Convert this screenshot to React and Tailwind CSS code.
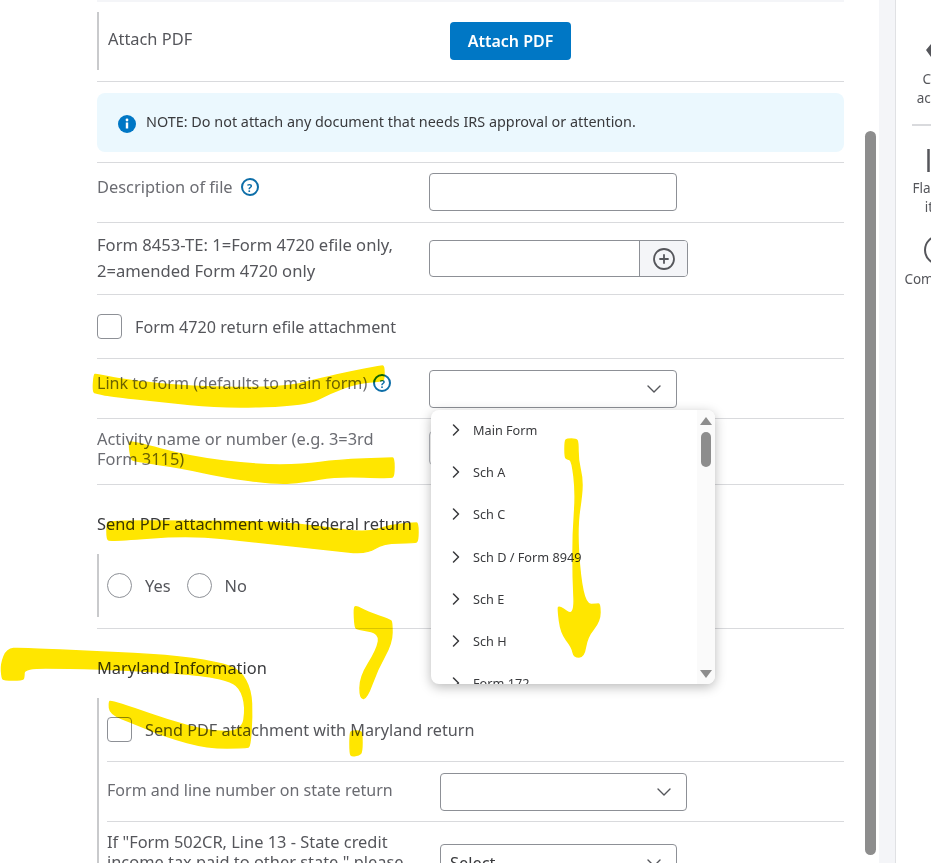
import React from 'react';
import { ChevronDown, ChevronRight, CirclePlus } from 'lucide-react';

const formOptions = ['Main Form', 'Sch A', 'Sch C', 'Sch D / Form 8949', 'Sch E', 'Sch H', 'Form 172'];

const highlightStrokes = [
  [[94, 375], [96, 374], [123, 380], [190, 387], [283, 388], [323, 378], [350, 372], [381, 366], [384, 366], [384, 379], [382, 381], [357, 383], [330, 393], [307, 405], [223, 408], [157, 401], [110, 396], [96, 393], [93, 392]],
  [[129, 443], [131, 441], [190, 457], [257, 465], [303, 465], [337, 460], [391, 458], [394, 458], [394, 476], [391, 478], [337, 476], [303, 482], [277, 484], [223, 477], [183, 468], [134, 461], [131, 459]],
  [[107, 524], [109, 521], [190, 521], [277, 522], [323, 527], [367, 533], [390, 525], [415, 523], [418, 523], [418, 541], [415, 543], [383, 543], [367, 554], [330, 550], [257, 542], [190, 535], [110, 541], [107, 539]],
  [[565, 441], [567, 439], [576, 439], [578, 442], [578, 460], [582, 477], [582, 493], [577, 527], [580, 577], [586, 605], [597, 604], [600, 604], [600, 621], [587, 637], [584, 657], [574, 657], [572, 647], [561, 633], [558, 609], [559, 606], [575, 617], [573, 577], [573, 533], [576, 493], [572, 460], [567, 459], [565, 457]],
  [[1, 664], [7, 649], [20, 648], [100, 652], [167, 655], [217, 662], [240, 670], [251, 690], [252, 717], [250, 746], [247, 748], [207, 748], [167, 737], [133, 723], [110, 714], [109, 702], [111, 701], [133, 708], [167, 720], [207, 731], [242, 732], [246, 707], [240, 687], [227, 680], [200, 675], [133, 670], [67, 668], [24, 668], [24, 678], [22, 680], [4, 680], [2, 678]],
  [[354, 608], [356, 606], [367, 612], [390, 620], [392, 622], [392, 643], [377, 670], [367, 698], [360, 699], [360, 677], [377, 650], [380, 633], [357, 629], [355, 627]],
  [[350, 733], [352, 731], [360, 731], [362, 733], [362, 752], [359, 755], [352, 756], [350, 754]],
];

// rounds the hand drawn outline, like a marker stroke
function smoothPath(points) {
  const mid = (a, b) => [(a[0] + b[0]) / 2, (a[1] + b[1]) / 2];
  const start = mid(points[points.length - 1], points[0]);
  let d = `M${start[0]} ${start[1]}`;
  points.forEach((p, i) => {
    const m = mid(p, points[(i + 1) % points.length]);
    d += ` Q${p[0]} ${p[1]} ${m[0]} ${m[1]}`;
  });
  return d + ' Z';
}

function HelpIcon() {
  return (
    <span className="inline-flex items-center justify-center w-[18px] h-[18px] rounded-full border-2 border-[#0d6ea8] text-[#0d6ea8] text-[11px] font-bold leading-none">
      ?
    </span>
  );
}

function Checkbox() {
  return <span className="block w-[25px] h-[25px] shrink-0 rounded-[4px] border border-[#8d9096] bg-white" />;
}

function Radio({ label }) {
  return (
    <div className="flex items-center">
      <span className="block w-[25px] h-[25px] rounded-full border border-[#8d9096] bg-white" />
      <span className="ml-[13px] mt-[2px] text-[#55565b]">{label}</span>
    </div>
  );
}

function Select({ width, children }) {
  return (
    <div className={`${width} h-[38px] shrink-0 flex items-center justify-between pl-[9px] pr-[10px] rounded-[4px] border border-[#8d9096] bg-white text-[#393a3d]`}>
      <span>{children}</span>
      <ChevronDown size={24} strokeWidth={1.4} className="text-[#55565b]" />
    </div>
  );
}

function FormDropdown() {
  return (
    <div className="absolute left-[334px] top-[410px] w-[284px] h-[274px] overflow-hidden rounded-lg bg-white shadow-[0_3px_12px_rgba(0,0,0,0.28)]">
      <div className="pt-[11px]">
        {formOptions.map(option => (
          <div key={option} className="h-[42.2px] flex items-start pl-[15px] text-[12.7px] leading-[18px] text-[#393a3d]">
            <ChevronRight size={20} strokeWidth={1.8} className="-mt-[1px]" />
            <span className="ml-[7px]">{option}</span>
          </div>
        ))}
      </div>
      <div className="absolute right-0 top-0 w-[18px] h-full bg-[#fafafa] flex flex-col items-center">
        <span className="mt-[7px] w-0 h-0 border-x-[6px] border-x-transparent border-b-[8px] border-b-[#8d8d8d]" />
        <span className="mt-[7px] w-[10px] h-[35px] rounded-full bg-[#8d8d8d]" />
        <span className="mt-auto mb-[6px] w-0 h-0 border-x-[6px] border-x-transparent border-t-[8px] border-t-[#8d8d8d]" />
      </div>
    </div>
  );
}

function RailItem({ icon, lines }) {
  return (
    <div className="flex flex-col items-center text-[13.5px] leading-[19px] text-[#55565b]">
      {icon}
      {lines.map(line => (
        <span key={line}>{line}</span>
      ))}
    </div>
  );
}

export default function App() {
  return (
    <div
      className="relative flex w-[931px] h-[863px] overflow-hidden bg-white text-[16.4px]"
      style={{ fontFamily: '"Noto Sans", sans-serif' }}
    >
      {/* Form */}
      <div className="relative ml-[97px] w-[747px] shrink-0">
        <div className="h-[2px] bg-[#f4f5f8]" />

        <div className="h-[80px] pt-[10px] border-b border-[#d9dadd]">
          <div className="h-[58px] flex items-start pl-[9px] border-l-2 border-[#c9cacc] text-[#55565b]">
            <span className="w-[342px] mt-[15px]">Attach PDF</span>
            <button className="mt-[10px] w-[121px] h-[38px] rounded-[4px] bg-[#0077c5] text-white font-semibold text-[16px]">Attach PDF</button>
          </div>
        </div>

        <div className="pt-[11px] h-[81px] border-b border-[#d9dadd]">
          <div className="h-[59px] flex items-center pl-[21px] rounded-lg bg-[#ebf8fe] text-[14.4px] text-[#393a3d]">
            <svg width="18" height="18" viewBox="0 0 18 18" className="mt-[2px]">
              <circle cx="9" cy="9" r="9" fill="#0077c5" />
              <rect x="7.8" y="7.5" width="2.4" height="6" fill="#fff" />
              <circle cx="9" cy="5" r="1.4" fill="#fff" />
            </svg>
            <span className="ml-[10px] -mt-[1px]">NOTE: Do not attach any document that needs IRS approval or attention.</span>
          </div>
        </div>

        <div className="h-[60px] flex items-start border-b border-[#d9dadd]">
          <div className="w-[332px] mt-[12px] flex items-center gap-[8px] text-[#6b6c72]">
            <span>Description of file</span>
            <HelpIcon />
          </div>
          <div className="mt-[10px] w-[248px] h-[38px] rounded-[4px] border border-[#8d9096]" />
        </div>

        <div className="h-[72px] flex items-start border-b border-[#d9dadd]">
          <div className="w-[332px] mt-[9px] leading-[26px] text-[16.6px] text-[#55565b]">
            Form 8453-TE: 1=Form 4720 efile only,
            <br />
            2=amended Form 4720 only
          </div>
          <div className="mt-[17px] flex h-[37px] w-[259px] rounded-[4px] border border-[#8d9096] overflow-hidden">
            <div className="flex-1" />
            <div className="w-[48px] flex items-center justify-center border-l border-[#8d9096] bg-[#f4f5f8]">
              <CirclePlus size={24} strokeWidth={1.8} className="text-[#55565b]" />
            </div>
          </div>
        </div>

        <div className="h-[64px] flex items-center border-b border-[#d9dadd] text-[16.15px] text-[#55565b]">
          <Checkbox />
          <span className="ml-[13px] mt-[2px]">Form 4720 return efile attachment</span>
        </div>

        <div className="h-[60px] flex items-start border-b border-[#d9dadd]">
          <div className="w-[332px] mt-[12px] flex items-center gap-[6px] text-[16.1px] text-[#6b6c72]">
            <span>Link to form (defaults to main form)</span>
            <HelpIcon />
          </div>
          <div className="mt-[11px]">
            <Select width="w-[248px]" />
          </div>
        </div>

        <div className="h-[66px] flex items-start border-b border-[#d9dadd]">
          <div className="w-[332px] mt-[10px] leading-[20px] text-[#6b6c72]">
            Activity name or number (e.g. 3=3rd
            <br />
            Form 3115)
          </div>
          <div className="mt-[12px] w-[248px] h-[34px] rounded-[4px] border border-[#b4b7bd]" />
        </div>

        <div className="h-[144px] border-b border-[#d9dadd]">
          <div className="pt-[27px] h-[69px] text-[#393a3d]">Send PDF attachment with federal return</div>
          <div className="h-[63px] flex items-center gap-[16px] pl-[8px] border-l-2 border-[#c9cacc]">
            <Radio label="Yes" />
            <Radio label="No" />
          </div>
        </div>

        <div className="pt-[27px] h-[69px] text-[#393a3d]">Maryland Information</div>

        <div className="pl-[8px] border-l-2 border-[#c9cacc] h-[200px]">
          <div className="h-[64px] flex items-center border-b border-[#d9dadd] text-[16.2px] text-[#55565b]">
            <Checkbox />
            <span className="ml-[13px] mt-[2px]">Send PDF attachment with Maryland return</span>
          </div>
          <div className="h-[60px] flex items-start border-b border-[#d9dadd]">
            <div className="w-[333px] mt-[16px] text-[16.06px] text-[#6b6c72]">Form and line number on state return</div>
            <div className="mt-[11px]">
              <Select width="w-[247px]" />
            </div>
          </div>
          <div className="flex items-start">
            <div className="w-[333px] mt-[10px] leading-[20px] text-[#55565b]">
              If "Form 502CR, Line 13 - State credit
              <br />
              income tax paid to other state," please
            </div>
            <div className="mt-[22px]">
              <Select width="w-[237px]">Select</Select>
            </div>
          </div>
        </div>

        <FormDropdown />
      </div>

      {/* Page scrollbar */}
      <div className="ml-[21px] mt-[131px] w-[11px] h-[724px] shrink-0 rounded-full bg-[#8d8d8d]" />

      {/* Right rail */}
      <div className="ml-[3px] w-[17px] shrink-0 bg-[#f4f5f8] border-r border-[#e0e1e4]" />
      <div className="w-[86px] shrink-0 flex flex-col items-center bg-white">
        <span className="h-[13px] w-[2px] ml-[66px] bg-[#55565b]" />
        <div className="mt-[29px]">
          <RailItem
            icon={
              <svg width="28" height="16" viewBox="0 0 28 16" fill="#55565b" className="mb-[12px]">
                <path d="M1 8 L6 2 V6 H20 V10 H6 V15 Z" />
              </svg>
            }
            lines={['Clear', 'activity']}
          />
        </div>
        <div className="mt-[16px] w-[54px] h-[2px] bg-[#d9dadd]" />
        <div className="mt-[23px]">
          <RailItem
            icon={
              <svg width="24" height="24" viewBox="0 0 24 24" fill="none" stroke="#55565b" strokeWidth="2.5" className="mb-[6px]">
                <path d="M1.5 0 V23 M8 2 H20 L15 8 L20 14 H8" />
              </svg>
            }
            lines={['Flag this', 'item']}
          />
        </div>
        <div className="mt-[18px]">
          <RailItem icon={<span className="block w-[30px] h-[30px] mb-[5px] rounded-full border-2 border-[#55565b]" />} lines={['Comments']} />
        </div>
      </div>

      {/* Yellow marker scribbled over the screenshot */}
      <svg className="absolute inset-0 mix-blend-multiply pointer-events-none" width="931" height="863" viewBox="0 0 931 863">
        {highlightStrokes.map(points => (
          <path key={points[0].join()} d={smoothPath(points)} fill="#ffe600" stroke="#ffe600" strokeWidth="1.5" strokeLinejoin="round" />
        ))}
      </svg>
    </div>
  );
}
